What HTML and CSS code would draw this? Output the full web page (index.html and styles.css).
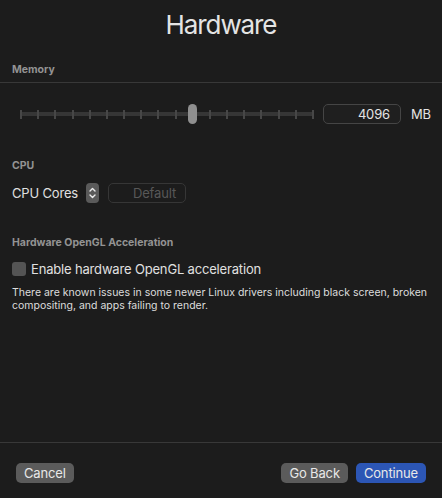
FILE: index.html
```html
<!DOCTYPE html>
<html>
<head>
<meta charset="utf-8">
<link rel="stylesheet" href="styles.css">
</head>
<body>
<div class="window">
  <h1 class="title">Hardware</h1>

  <section class="group">
    <h2 class="group-label">Memory</h2>
    <div class="rule"></div>
    <div class="memory-row">
      <div class="slider">
        <div class="track"></div>
        <div class="ticks">
          <span></span><span></span><span></span><span></span><span></span><span></span>
          <span></span><span></span><span></span><span></span><span></span><span></span>
          <span></span><span></span><span></span><span></span><span></span><span></span>
        </div>
        <div class="thumb" style="left: 58.8%"></div>
      </div>
      <div class="num-field">4096</div>
      <span class="unit">MB</span>
    </div>
  </section>

  <section class="group cpu">
    <h2 class="group-label">CPU</h2>
    <div class="cpu-row">
      <span class="label">CPU Cores</span>
      <div class="stepper">
        <svg width="13" height="20" viewBox="0 0 13 20">
          <path d="M4 8 L6.5 5.5 L9 8" fill="none" stroke="#ececec" stroke-width="1.4" stroke-linecap="round" stroke-linejoin="round"/>
          <path d="M4 12 L6.5 14.5 L9 12" fill="none" stroke="#ececec" stroke-width="1.4" stroke-linecap="round" stroke-linejoin="round"/>
        </svg>
      </div>
      <div class="text-field">Default</div>
    </div>
  </section>

  <section class="group gl">
    <h2 class="group-label">Hardware OpenGL Acceleration</h2>
    <label class="check-row">
      <span class="checkbox"></span>
      <span class="label">Enable hardware OpenGL acceleration</span>
    </label>
    <p class="note">There are known issues in some newer Linux drivers including black screen, broken compositing, and apps failing to render.</p>
  </section>

  <footer class="footer">
    <div class="rule"></div>
    <div class="buttons">
      <button class="btn">Cancel</button>
      <div class="right">
        <button class="btn">Go Back</button>
        <button class="btn primary">Continue</button>
      </div>
    </div>
  </footer>
</div>
</body>
</html>
```

FILE: styles.css
```css
* { box-sizing: border-box; }
html, body {
  margin: 0;
  padding: 0;
  background: #1c1c1c;
}
body {
  font-family: Inter, "Liberation Sans", sans-serif;
  color: #dedede;
}
.window {
  width: 442px;
  height: 498px;
  display: flex;
  flex-direction: column;
}
.title {
  margin: 0;
  padding-top: 9px;
  height: 63px;
  text-align: center;
  font-size: 26px;
  font-weight: 400;
  line-height: 32px;
  letter-spacing: -1.1px;
  color: #e4e4e4;
}
.group-label {
  margin: 0;
  padding-left: 12px;
  font-size: 10.5px;
  font-weight: 700;
  line-height: 14px;
  color: #939393;
}
.rule {
  height: 1px;
  background: #383838;
}
.group .rule {
  margin-top: 5px;
}
.memory-row {
  display: flex;
  align-items: center;
  height: 20px;
  margin-top: 21px;
  padding-left: 20px;
}
.slider {
  position: relative;
  width: 294px;
  height: 20px;
}
.track {
  position: absolute;
  left: 0;
  right: 0;
  top: 8px;
  height: 4px;
  background: #363636;
  border-radius: 2px;
}
.ticks {
  position: absolute;
  inset: 0;
  display: flex;
  justify-content: space-between;
  align-items: center;
}
.ticks span {
  width: 2px;
  height: 9px;
  background: #474747;
}
.thumb {
  position: absolute;
  top: 0;
  width: 9px;
  height: 20px;
  margin-left: -4.5px;
  background: #8f8f8f;
  border-radius: 4.5px;
}
.num-field {
  margin-left: 9px;
  width: 78px;
  height: 20px;
  border: 1px solid #454545;
  border-radius: 5px;
  background: #1f1f1f;
  text-align: right;
  padding-right: 10px;
  font-size: 13px;
  line-height: 18px;
  letter-spacing: -0.15px;
  color: #e4e4e4;
}
.unit {
  margin-left: 10px;
  font-size: 13px;
  letter-spacing: -0.15px;
  color: #e4e4e4;
}
.cpu {
  margin-top: 35px;
}
.cpu-row {
  display: flex;
  align-items: center;
  height: 20px;
  margin-top: 10px;
  padding-left: 12px;
}
.label {
  font-size: 13px;
  letter-spacing: -0.17px;
  color: #e0e0e0;
}
.stepper {
  margin-left: 8px;
  width: 13px;
  height: 20px;
  background: #5a5a5a;
  border-radius: 4px;
  display: flex;
}
.text-field {
  margin-left: 9px;
  width: 78px;
  height: 20px;
  border: 1px solid #363636;
  border-radius: 5px;
  text-align: right;
  padding-right: 9px;
  font-size: 13px;
  line-height: 18px;
  letter-spacing: -0.15px;
  color: #585858;
}
.gl {
  margin-top: 33px;
}
.check-row {
  display: flex;
  align-items: center;
  gap: 5px;
  margin-top: 11px;
  padding-left: 12px;
  height: 16px;
}
.checkbox {
  width: 14px;
  height: 14px;
  border-radius: 3px;
  background: #545454;
}
.note {
  margin: 9px 0 0;
  padding: 0 12px;
  font-size: 10.5px;
  line-height: 13px;
  color: #dcdcdc;
}
.footer {
  margin-top: auto;
  padding-bottom: 15px;
}
.buttons {
  display: flex;
  justify-content: space-between;
  align-items: center;
  padding: 20px 16px 0;
}
.right {
  display: flex;
  gap: 8px;
}
.btn {
  height: 20px;
  padding: 0 8px;
  border: none;
  border-radius: 5px;
  background: #5b5b5b;
  color: #e8e8e8;
  font-family: Inter, "Liberation Sans", sans-serif;
  font-size: 13px;
  letter-spacing: -0.15px;
  line-height: 20px;
}
.btn.primary {
  background: #2c56b5;
}
```
